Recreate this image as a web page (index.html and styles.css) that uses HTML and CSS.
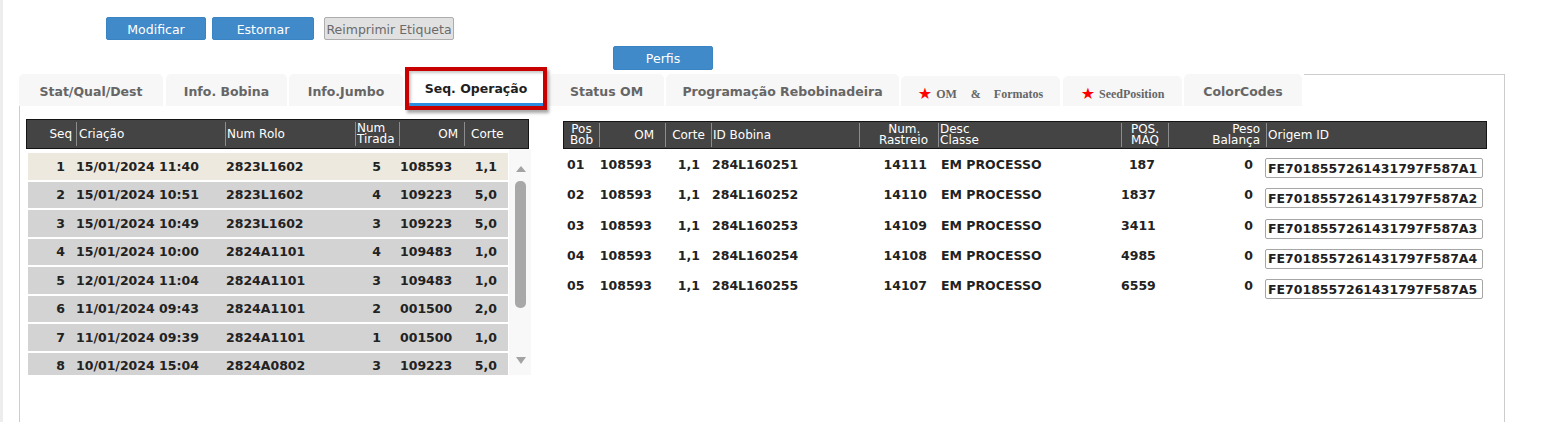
FILE: index.html
```html
<!DOCTYPE html>
<html lang="pt">
<head>
<meta charset="utf-8">
<title>Seq. Operação</title>
<link rel="stylesheet" href="styles.css">
</head>
<body>
<div class="page">
  <div class="actions">
    <button class="btn btn-primary btn-modificar">Modificar</button>
    <button class="btn btn-primary btn-estornar">Estornar</button>
    <button class="btn btn-disabled">Reimprimir Etiqueta</button>
  </div>
  <div class="perfis-row">
    <button class="btn btn-primary btn-perfis">Perfis</button>
  </div>

  <div class="tabs">
    <div class="tab-strip">
      <div class="tab t-stat">Stat/Qual/Dest</div>
      <div class="tab t-bobina">Info. Bobina</div>
      <div class="tab t-jumbo">Info.Jumbo</div>
      <div class="tab-mark"><div class="tab tab-active">Seq. Operação</div></div>
      <div class="tab t-status">Status OM</div>
      <div class="tab t-prog">Programação Rebobinadeira</div>
      <div class="tab tab-serif t-omf"><span class="star">★</span>OM<span class="amp">&amp;</span>Formatos</div>
      <div class="tab tab-serif t-seed"><span class="star">★</span>SeedPosition</div>
      <div class="tab t-color">ColorCodes</div>
      <div class="tab-filler"></div>
    </div>

    <div class="panel-body">
      <div class="left-grid">
        <div class="lh">
          <div class="hc hc-first al-r pr4">Seq</div>
          <div class="hc pl2">Criação</div>
          <div class="hc pl1">Num Rolo</div>
          <div class="hc pl1 two">Num<br>Tirada</div>
          <div class="hc al-r pr6">OM</div>
          <div class="hc pl6">Corte</div>
        </div>
        <div class="scroll-area">
          <div class="lrows">
            <div class="lrow lrow-sel"><span class="c-seq">1</span><span>15/01/2024 11:40</span><span class="c-rolo">2823L1602</span><span class="c-tir">5</span><span class="c-om">108593</span><span class="c-corte">1,1</span></div>
            <div class="lrow"><span class="c-seq">2</span><span>15/01/2024 10:51</span><span class="c-rolo">2823L1602</span><span class="c-tir">4</span><span class="c-om">109223</span><span class="c-corte">5,0</span></div>
            <div class="lrow"><span class="c-seq">3</span><span>15/01/2024 10:49</span><span class="c-rolo">2823L1602</span><span class="c-tir">3</span><span class="c-om">109223</span><span class="c-corte">5,0</span></div>
            <div class="lrow"><span class="c-seq">4</span><span>15/01/2024 10:00</span><span class="c-rolo">2824A1101</span><span class="c-tir">4</span><span class="c-om">109483</span><span class="c-corte">1,0</span></div>
            <div class="lrow"><span class="c-seq">5</span><span>12/01/2024 11:04</span><span class="c-rolo">2824A1101</span><span class="c-tir">3</span><span class="c-om">109483</span><span class="c-corte">1,0</span></div>
            <div class="lrow"><span class="c-seq">6</span><span>11/01/2024 09:43</span><span class="c-rolo">2824A1101</span><span class="c-tir">2</span><span class="c-om">001500</span><span class="c-corte">2,0</span></div>
            <div class="lrow"><span class="c-seq">7</span><span>11/01/2024 09:39</span><span class="c-rolo">2824A1101</span><span class="c-tir">1</span><span class="c-om">001500</span><span class="c-corte">1,0</span></div>
            <div class="lrow"><span class="c-seq">8</span><span>10/01/2024 15:04</span><span class="c-rolo">2824A0802</span><span class="c-tir">3</span><span class="c-om">109223</span><span class="c-corte">5,0</span></div>
          </div>
          <div class="sbar">
            <div class="arrow-up"></div>
            <div class="thumb"></div>
            <div class="sbar-space"></div>
            <div class="arrow-down"></div>
          </div>
        </div>
      </div>

      <div class="right-grid">
        <div class="rh">
          <div class="hc hc-first al-c two">Pos<br>Bob</div>
          <div class="hc al-r pr11">OM</div>
          <div class="hc al-c">Corte</div>
          <div class="hc pl1">ID Bobina</div>
          <div class="hc al-r pr10 two">Num.&nbsp;&nbsp;<br>Rastreio</div>
          <div class="hc pl1 two">Desc<br>Classe</div>
          <div class="hc al-c two">POS.<br>MÁQ</div>
          <div class="hc al-r pr6 two">Peso<br>Balança</div>
          <div class="hc pl1">Origem ID</div>
        </div>
        <div class="rrows">
          <div class="rrow"><span class="r-pos">01</span><span class="r-om">108593</span><span class="r-corte">1,1</span><span class="r-id">284L160251</span><span class="r-ras">14111</span><span class="r-desc">EM PROCESSO</span><span class="r-maq">187</span><span class="r-peso">0</span><span class="r-orig"><input class="orig-input" type="text" value="FE7018557261431797F587A1" readonly></span></div>
          <div class="rrow"><span class="r-pos">02</span><span class="r-om">108593</span><span class="r-corte">1,1</span><span class="r-id">284L160252</span><span class="r-ras">14110</span><span class="r-desc">EM PROCESSO</span><span class="r-maq">1837</span><span class="r-peso">0</span><span class="r-orig"><input class="orig-input" type="text" value="FE7018557261431797F587A2" readonly></span></div>
          <div class="rrow"><span class="r-pos">03</span><span class="r-om">108593</span><span class="r-corte">1,1</span><span class="r-id">284L160253</span><span class="r-ras">14109</span><span class="r-desc">EM PROCESSO</span><span class="r-maq">3411</span><span class="r-peso">0</span><span class="r-orig"><input class="orig-input" type="text" value="FE7018557261431797F587A3" readonly></span></div>
          <div class="rrow"><span class="r-pos">04</span><span class="r-om">108593</span><span class="r-corte">1,1</span><span class="r-id">284L160254</span><span class="r-ras">14108</span><span class="r-desc">EM PROCESSO</span><span class="r-maq">4985</span><span class="r-peso">0</span><span class="r-orig"><input class="orig-input" type="text" value="FE7018557261431797F587A4" readonly></span></div>
          <div class="rrow"><span class="r-pos">05</span><span class="r-om">108593</span><span class="r-corte">1,1</span><span class="r-id">284L160255</span><span class="r-ras">14107</span><span class="r-desc">EM PROCESSO</span><span class="r-maq">6559</span><span class="r-peso">0</span><span class="r-orig"><input class="orig-input" type="text" value="FE7018557261431797F587A5" readonly></span></div>
        </div>
      </div>
    </div>
  </div>
</div>
</body>
</html>
```

FILE: styles.css
```css
* { box-sizing: border-box; }
html, body { margin: 0; padding: 0; overflow: hidden; background: #fff; }
body { font-family: "DejaVu Sans", Verdana, sans-serif; color: #222; }

.page {
  border-left: 3px solid #ededed;
  height: 422px;
  padding-top: 17px;
}

/* buttons */
.actions { display: flex; padding-left: 103px; }
.btn {
  height: 23px;
  padding: 1px 0 0;
  font: 12.5px "DejaVu Sans", Verdana, sans-serif;
  border-radius: 2px;
  display: flex;
  align-items: center;
  justify-content: center;
}
.btn-primary { background: #418ac9; color: #fff; border: 1px solid #3b84c4; }
.btn-modificar { width: 100px; }
.btn-estornar { width: 102px; margin-left: 6px; }
.btn-disabled {
  width: 130px;
  margin-left: 10px;
  background: #e1e1e1;
  color: #6a6a6a;
  border: 1px solid #adadad;
}
.perfis-row { display: flex; padding-left: 610px; margin-top: 6px; }
.btn-perfis { width: 100px; height: 24px; }

/* tabs */
.tabs { margin-left: 16px; width: 1486px; }
.tab-strip { display: flex; align-items: flex-end; height: 36px; }
.tab {
  height: 32px;
  background: #f7f7f7;
  border-radius: 5px 5px 0 0;
  display: flex;
  align-items: center;
  justify-content: center;
  font-weight: bold;
  font-size: 12.5px;
  color: #666;
  white-space: nowrap;
  padding-top: 3px;
}
.t-stat { width: 144px; }
.t-bobina { width: 121px; margin-left: 3px; }
.t-jumbo { width: 114px; margin-left: 2px; }
.tab-mark {
  margin-left: 2px;
  width: 142px;
  height: 43px;
  margin-bottom: -4px;
  border: 4px solid #c80000;
  box-shadow: 2px 3px 3px rgba(0, 0, 0, 0.35);
  position: relative;
  z-index: 2;
  background: #fff;
}
.tab-active {
  width: 134px;
  height: 35px;
  border-radius: 0;
  background: #fff;
  color: #1f1f1f;
  border-bottom: 3px solid #2b8de0;
  box-shadow: inset 3px 3px 3px -1px rgba(0, 0, 0, 0.22);
  padding-top: 2px;
}
.t-status { width: 115px; margin-left: 2px; }
.t-prog { width: 233px; margin-left: 2px; }
.tab-serif {
  height: 30px;
  font-family: "Liberation Serif", "Times New Roman", serif;
  font-size: 12px;
  color: #666;
  padding-top: 7px;
}
.star {
  color: #ff0000;
  font-family: "DejaVu Sans", sans-serif;
  font-size: 16px;
  font-weight: normal;
  margin-right: 4px;
  position: relative;
  top: -1px;
}
.amp { margin: 0 13px 0 14px; }
.t-omf { width: 159px; margin-left: 2px; }
.t-seed { width: 119px; margin-left: 3px; }
.t-color { width: 118px; margin-left: 2px; }
.tab-filler {
  flex: 1;
  margin-left: 2px;
  height: 32px;
  border-top: 1px solid #cccccc;
  border-right: 1px solid #cccccc;
}

/* panel body */
.panel-body {
  height: 316px;
  border-left: 1px solid #cccccc;
  border-right: 1px solid #cccccc;
  display: flex;
  align-items: flex-start;
  padding: 13px 0 0 6px;
}

/* header shared */
.hc {
  border-left: 1px solid #8c8c8c;
  color: #fff;
  font-size: 12px;
  font-weight: normal;
  display: flex;
  flex-direction: column;
  justify-content: center;
  white-space: nowrap;
  margin: 2px 0;
}
.hc.two { line-height: 11px; }
.hc-first { border-left: none; }
.al-r { align-items: flex-end; text-align: right; }
.al-c { align-items: center; text-align: center; }
.pr4 { padding-right: 4px; }
.pr6 { padding-right: 6px; }
.pr10 { padding-right: 10px; }
.pr11 { padding-right: 11px; }
.pl1 { padding-left: 1px; }
.pl2 { padding-left: 2px; }
.pl6 { padding-left: 6px; }

/* left grid */
.left-grid { width: 505px; }
.lh {
  width: 503px;
  height: 30px;
  background: #444444;
  border: 1px solid #151515;
  display: grid;
  grid-template-columns: 49px 149px 130px 44px 65px 64px;
}
.scroll-area { display: flex; height: 226px; }
.lrows {
  width: 480px;
  margin-left: 2px;
  padding-top: 4px;
  height: 226px;
  overflow: hidden;
}
.lrow {
  height: 26.5px;
  margin-bottom: 2px;
  background: #d3d3d3;
  display: grid;
  grid-template-columns: 48px 149px 130px 44px 65px 44px;
  align-items: center;
  font-size: 12.5px;
  font-weight: bold;
  white-space: nowrap;
}
.lrow-sel { background: #ede9df; }
.c-seq { text-align: right; padding-right: 11px; }
.c-rolo { padding-left: 1px; }
.c-tir { text-align: right; padding-right: 18px; }
.c-om { padding-left: 1px; }
.c-corte { text-align: right; padding-right: 11px; }

.sbar {
  width: 22px;
  margin-left: 1px;
  height: 226px;
  background: #f8f8f8;
  display: flex;
  flex-direction: column;
  align-items: center;
  padding: 17px 0 11px 1px;
}
.arrow-up {
  width: 0;
  height: 0;
  border-left: 5.5px solid transparent;
  border-right: 5.5px solid transparent;
  border-bottom: 6px solid #a3a3a3;
}
.thumb {
  width: 11px;
  height: 127px;
  margin-top: 9px;
  border-radius: 5px;
  background: #a8a8a8;
}
.sbar-space { flex: 1; }
.arrow-down {
  width: 0;
  height: 0;
  border-left: 5.5px solid transparent;
  border-right: 5.5px solid transparent;
  border-top: 7px solid #a3a3a3;
}

/* right grid */
.right-grid { width: 924px; margin-left: 32px; margin-top: 2px; }
.rh {
  height: 28px;
  background: #444444;
  border: 1px solid #151515;
  display: grid;
  grid-template-columns: 35px 66px 46px 148px 79px 183px 47px 98px 220px;
}
.rh .hc { margin: 1px 0; }
.rrows { padding-left: 1px; }
.rrow {
  height: 30.25px;
  display: grid;
  grid-template-columns: 35px 66px 46px 148px 79px 183px 47px 98px 220px;
  align-items: start;
  font-size: 12.5px;
  font-weight: bold;
  line-height: 15px;
  white-space: nowrap;
}
.rrow > span { padding-top: 8px; }
.r-pos { padding-left: 3px; }
.r-om { text-align: right; padding-right: 13px; }
.r-corte { text-align: right; padding-right: 11px; }
.r-id { padding-left: 1px; }
.r-ras { text-align: right; padding-right: 11px; }
.r-desc { padding-left: 3px; }
.r-maq { text-align: right; padding-right: 13px; }
.r-peso { text-align: right; padding-right: 13px; }
.rrow > .r-orig { padding-top: 9px; margin-left: -1px; }
.orig-input {
  display: block;
  width: 218px;
  height: 20px;
  margin: 0;
  border: 1px solid #a6a6a6;
  border-radius: 2px;
  padding: 0 2px;
  font: bold 12.5px "DejaVu Sans", Verdana, sans-serif;
  color: #1f1f1f;
  background: #fff;
  outline: none;
}
```
